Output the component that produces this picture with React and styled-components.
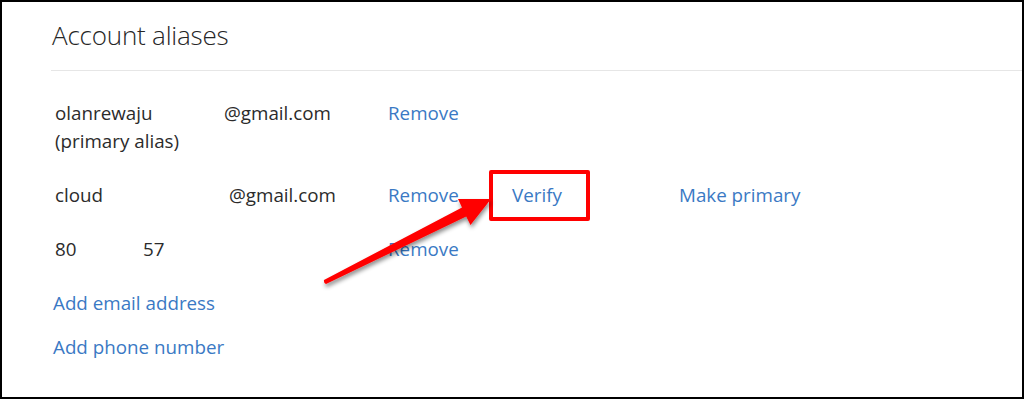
import React from "react";
import styled, { createGlobalStyle } from "styled-components";

const GlobalStyle = createGlobalStyle`
  html, body {
    margin: 0;
    padding: 0;
    background: #fff;
  }
  body {
    font-family: "Open Sans", "Noto Sans", sans-serif;
  }
`;

const Frame = styled.div`
  position: relative;
  box-sizing: border-box;
  width: 1024px;
  height: 399px;
  border: 2px solid #000;
  background: #fff;
  overflow: hidden;
  padding: 15px 0 0 49px;
`;

const Title = styled.h2`
  margin: 0 0 0 1px;
  font-size: 26px;
  font-weight: 300;
  color: #262626;
  line-height: 36px;
  letter-spacing: -0.2px;
`;

const Divider = styled.div`
  height: 1px;
  background: #e6e6e6;
  margin: 17px 0 0 0;
`;

const List = styled.div`
  display: flex;
  flex-direction: column;
  padding-top: 28px;
`;

const Row = styled.div`
  display: flex;
  align-items: ${(p) => (p.$center ? "center" : "flex-start")};
  height: ${(p) => p.$height}px;
`;

const Cell = styled.div`
  box-sizing: border-box;
  width: ${(p) => p.$width}px;
  padding-left: ${(p) => p.$indent || 0}px;
  font-size: 18.8px;
  line-height: 28px;
  color: #2b2b2b;
  flex-shrink: 0;
`;

const Link = styled.a`
  font-size: 18.8px;
  line-height: 28px;
  color: #3a79c4;
  text-decoration: none;
  cursor: pointer;
`;

const Highlight = styled.span`
  box-sizing: border-box;
  display: inline-flex;
  align-items: center;
  width: 101px;
  height: 51px;
  margin-left: -23px;
  padding-left: 19px;
  border: 4px solid #ff0000;
  border-radius: 2px;
`;

const AddLinks = styled.div`
  display: flex;
  flex-direction: column;
  gap: 16px;
  padding: 0 0 0 2px;
`;

const ArrowLayer = styled.svg`
  position: absolute;
  left: 0;
  top: 0;
  pointer-events: none;
`;

const Arrow = () => (
  <ArrowLayer width="1024" height="399" viewBox="0 0 1024 399">
    <defs>
      <filter id="sh" x="-20%" y="-20%" width="140%" height="140%">
        <feDropShadow dx="1" dy="3" stdDeviation="2" floodColor="#000" floodOpacity="0.45" />
      </filter>
    </defs>
    <path
      d="M489 197 L456 197 L460 205.5 L322 278 Q321.5 281 324 282 L464.2 214.5 L468.5 223 Z"
      fill="#ff0000"
      filter="url(#sh)"
    />
  </ArrowLayer>
);

const App = () => (
  <>
    <GlobalStyle />
    <Frame>
      <Title>Account aliases</Title>
      <Divider />
      <List>
        <Row $height={82}>
          <Cell $width={173} $indent={4}>
            olanrewaju
            <br />
            (primary alias)
          </Cell>
          <Cell $width={164}>@gmail.com</Cell>
          <Link>Remove</Link>
        </Row>
        <Row $height={54} $center style={{ marginTop: -13, marginBottom: 13 }}>
          <Cell $width={178} $indent={4}>cloud</Cell>
          <Cell $width={159}>@gmail.com</Cell>
          <Cell $width={124}>
            <Link>Remove</Link>
          </Cell>
          <Cell $width={167}>
            <Highlight>
              <Link>Verify</Link>
            </Highlight>
          </Cell>
          <Link>Make primary</Link>
        </Row>
        <Row $height={54}>
          <Cell $width={92} $indent={4}>80</Cell>
          <Cell $width={245}>57</Cell>
          <Link>Remove</Link>
        </Row>
        <AddLinks>
          <Link>Add email address</Link>
          <Link>Add phone number</Link>
        </AddLinks>
      </List>
      <Arrow />
    </Frame>
  </>
);

export default App;
